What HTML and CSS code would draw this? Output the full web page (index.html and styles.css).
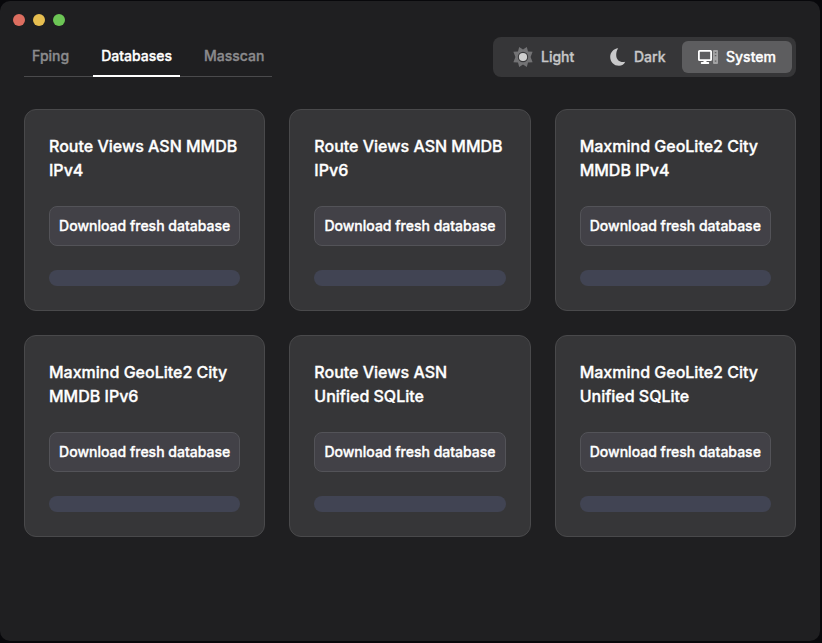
FILE: index.html
```html
<!DOCTYPE html>
<html lang="en">
<head>
<meta charset="utf-8">
<title>Databases</title>
<link rel="stylesheet" href="styles.css">
</head>
<body>
<div class="window">
  <div class="lights"><i class="close"></i><i class="minimize"></i><i class="zoom"></i></div>
  <header class="header">
    <nav class="tabs">
      <a class="tab">Fping</a>
      <a class="tab active">Databases</a>
      <a class="tab">Masscan</a>
    </nav>
    <div class="themes">
      <button class="theme light">
        <svg class="icon" width="20" height="20" viewBox="0 0 20 20"><path fill="#737375" d="M6.2 0 10 2.5 13.8 0 15 4.4 19.6 4.8 17.6 10 19.6 15.2 15 15.6 13.8 20 10 17.5 6.2 20 5 15.6 .4 15.2 2.4 10 .4 4.8 5 4.4Z"/><circle cx="10" cy="10" r="5.2" fill="#39393b"/><circle cx="10" cy="10" r="4.1" fill="#cfcfcf"/></svg>
        <span>Light</span>
      </button>
      <button class="theme dark">
        <svg class="icon" width="16" height="18" viewBox="0 0 16 18"><path fill="#c9c9ca" d="M8.2 0.2C3.2 .8 .2 4.5 .2 9C.2 14 4 17.8 9 17.8C11.8 17.8 14.2 16.4 15.2 13.8C10.2 15 6.2 12 6.2 7C6.2 4.4 6.9 2 8.2 .2Z"/></svg>
        <span>Dark</span>
      </button>
      <button class="theme system selected">
        <svg class="icon" width="20" height="14" viewBox="0 0 20 14"><rect x=".9" y=".9" width="12.2" height="9.2" rx=".7" fill="none" stroke="#fff" stroke-width="1.8"/><path fill="#fff" d="M5.5 10h3v2h2q.7 0 .7 1t-.7 1h-7q-.7 0-.7-1t.7-1h2Z"/><rect x="15" width="5" height="14" rx="1" fill="#a2a2a3"/><path fill="#626263" d="M16.8 2h1.5v1.3h-1.5zM16.8 5h1.5v1.3h-1.5zM16.8 10.5h1.5v1.3h-1.5z"/></svg>
        <span>System</span>
      </button>
    </div>
  </header>
  <main class="grid">
    <section class="card"><h2>Route Views ASN MMDB IPv4</h2><button class="download">Download fresh database</button><div class="progress"></div></section>
    <section class="card"><h2>Route Views ASN MMDB IPv6</h2><button class="download">Download fresh database</button><div class="progress"></div></section>
    <section class="card"><h2>Maxmind GeoLite2 City MMDB IPv4</h2><button class="download">Download fresh database</button><div class="progress"></div></section>
    <section class="card"><h2>Maxmind GeoLite2 City MMDB IPv6</h2><button class="download">Download fresh database</button><div class="progress"></div></section>
    <section class="card"><h2>Route Views ASN Unified SQLite</h2><button class="download">Download fresh database</button><div class="progress"></div></section>
    <section class="card"><h2>Maxmind GeoLite2 City Unified SQLite</h2><button class="download">Download fresh database</button><div class="progress"></div></section>
  </main>
</div>
</body>
</html>
```
FILE: styles.css
```css
* { box-sizing: border-box; }
body {
  margin: 0;
  height: 643px;
  padding: 1px 2px 2px 0;
  overflow: hidden;
  background: #08080b;
  font-family: Inter, sans-serif;
  -webkit-text-stroke: 0.35px currentColor;
}
.window {
  height: 640px;
  border-radius: 10px;
  background: #1f1f21;
  padding: 13px 24px 0;
}
.lights {
  display: flex;
  gap: 8px;
  margin-left: -11px;
}
.lights i {
  width: 12px;
  height: 12px;
  border-radius: 50%;
}
.close { background: #dd6e60; }
.minimize { background: #e6be50; }
.zoom { background: #6cc555; }
.header {
  display: flex;
  justify-content: space-between;
  align-items: flex-start;
  margin-top: 11px;
}
.tabs {
  display: flex;
  gap: 16px;
  height: 40px;
  border-bottom: 1px solid #4a4a4c;
}
.tab {
  height: 40px;
  padding: 9px 8px 0;
  font-size: 14px;
  line-height: 20px;
  font-weight: 500;
  color: #8b8b8d;
}
.tab.active {
  color: #fff;
  border-bottom: 2px solid #fff;
}
.themes {
  display: flex;
  width: 303px;
  height: 40px;
  padding: 4px;
  border-radius: 8px;
  background: #363638;
}
.theme {
  display: flex;
  align-items: center;
  height: 32px;
  padding: 0 16px;
  border: 0;
  border-radius: 6px;
  background: none;
  color: #c7c7c8;
  font: 500 14px/20px Inter, sans-serif;
  gap: 8px;
}
.icon { flex: none; display: block; }
.light { width: 95px; }
.dark { width: 90px; margin-right: auto; padding-left: 18px; padding-right: 12px; gap: 8px; }
.selected {
  width: 110px;
  background: #5d5d5f;
  color: #fff;
}
.grid {
  display: grid;
  grid-template-columns: repeat(3, 1fr);
  gap: 24px;
  margin-top: 32px;
}
.card {
  display: flex;
  flex-direction: column;
  gap: 24px;
  padding: 24px;
  border: 1px solid #49494b;
  border-radius: 12px;
  background: #363638;
}
h2 {
  margin: 0;
  font-size: 16px;
  line-height: 24px;
  font-weight: 500;
  color: #fff;
}
.download {
  height: 40px;
  padding: 0;
  border: 1px solid #535358;
  border-radius: 8px;
  background: #424147;
  color: #fff;
  font: 500 14px/20px Inter, sans-serif;
  white-space: nowrap;
}
.progress {
  height: 16px;
  border-radius: 8px;
  background: #414453;
}
```
